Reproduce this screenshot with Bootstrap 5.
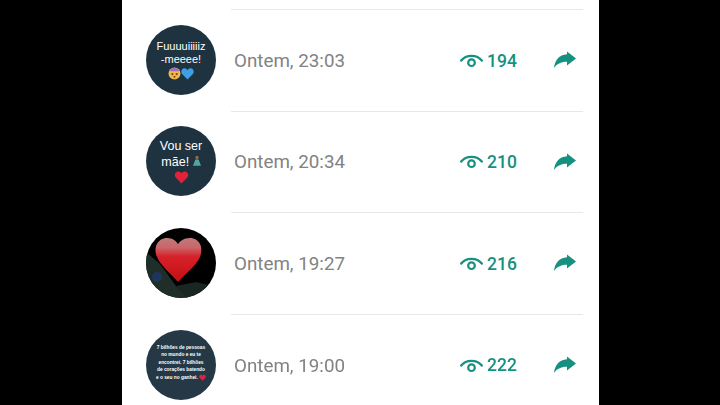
<!DOCTYPE html>
<html lang="pt">
<head>
<meta charset="utf-8">
<title>Status</title>
<link href="https://cdn.jsdelivr.net/npm/bootstrap@5.3.0/dist/css/bootstrap.min.css" rel="stylesheet">
<style>
html,body{height:405px;overflow:hidden;background:#000}
.sheet{width:477px;height:405px;margin-left:122px;background:#fff;padding-top:9px;font-family:Roboto,"Liberation Sans",sans-serif;filter:blur(.45px)}
.entry{height:101.6px}
.avatar-cell{width:109px;padding-left:24px;flex:none}
.avatar-disc{width:70px;height:70px;border-radius:50%;background:#1f3240;color:#fff;text-align:center;overflow:hidden;font-family:"Liberation Sans",sans-serif}
.entry-body{border-top:1px solid #e8e8e8;margin-right:16px;padding-left:3px;padding-right:7px}
.stamp{font-size:18.8px;color:#828282;line-height:1;margin-top:2px}
.views{color:#16917f;font-size:17.5px;font-weight:500;line-height:1;width:58px;margin-right:36px;gap:4px;margin-top:2px}
.av-a{font-size:11px;line-height:13.500px;padding-top:15px}
.av-b{font-size:12.500px;line-height:15px;padding-top:13px}
.av-d{font-size:4.800px;line-height:7.600px;font-weight:700;padding-top:14px;background:#243846}
.emoji{display:inline-block;vertical-align:-2px}
.disc-black{background:#000}
</style>
</head>
<body>
<div class="sheet">

<div class="entry d-flex">
  <div class="avatar-cell d-flex align-items-center">
    <div class="avatar-disc av-a">Fuuuuiiiiiz<br>-meeee!<br>
      <svg class="emoji" width="13" height="13" viewBox="0 0 12 12"><circle cx="6" cy="6" r="5.500" fill="#f2b94a"/><path d="M2 4a4 3 0 0 1 8 0z" fill="#9a6fc0"/><circle cx="4" cy="6.500" r="1" fill="#6b4a20"/><circle cx="8" cy="6.500" r="1" fill="#6b4a20"/><circle cx="6" cy="9" r="1" fill="#6b4a20"/></svg><svg class="emoji" width="13" height="13" viewBox="0 0 12 12"><path d="M6 11.500 1 6.500C-.6 4.400.6 1.200 3.200 1.200 4.500 1.200 5.500 2 6 3c.5-1 1.500-1.800 2.800-1.800 2.600 0 3.800 3.200 2.200 5.300z" fill="#3d9fe6"/></svg>
    </div>
  </div>
  <div class="entry-body flex-grow-1 d-flex align-items-center">
    <div class="stamp flex-grow-1">Ontem, 23:03</div>
    <div class="views d-flex align-items-center">
      <svg width="23" height="15" viewBox="0 0 23 15" class="flex-shrink-0"><path d="M1.200 6.500C6 .2 17 .2 21.800 6.500" fill="none" stroke="#16917f" stroke-width="2.300" stroke-linecap="round"/><circle cx="11.500" cy="8.700" r="3.300" fill="none" stroke="#16917f" stroke-width="2.200"/></svg>
      <span>194</span>
    </div>
    <svg width="22" height="18" viewBox="0 0 22 18" class="flex-shrink-0"><path d="M13 .5 22 7.500 13 14.500V10.800C8 10.800 3 12.500 0 17 .8 9.500 5 3.800 13 3.300z" fill="#16917f"/></svg>
  </div>
</div>

<div class="entry d-flex">
  <div class="avatar-cell d-flex align-items-center">
    <div class="avatar-disc av-b">Vou ser<br>mãe!
      <svg class="emoji" width="8" height="14" viewBox="0 0 10 14"><circle cx="5" cy="2.500" r="2" fill="#9c6b4a"/><path d="M3 5h4l3 8H0z" fill="#4fa89a"/></svg><br>
      <svg class="emoji" width="15" height="14" viewBox="0 0 12 12"><path d="M6 11.500 1 6.500C-.6 4.400.6 1.200 3.200 1.200 4.500 1.200 5.500 2 6 3c.5-1 1.500-1.800 2.800-1.800 2.600 0 3.800 3.200 2.200 5.300z" fill="#e0233a"/></svg>
    </div>
  </div>
  <div class="entry-body flex-grow-1 d-flex align-items-center">
    <div class="stamp flex-grow-1">Ontem, 20:34</div>
    <div class="views d-flex align-items-center">
      <svg width="23" height="15" viewBox="0 0 23 15" class="flex-shrink-0"><path d="M1.200 6.500C6 .2 17 .2 21.800 6.500" fill="none" stroke="#16917f" stroke-width="2.300" stroke-linecap="round"/><circle cx="11.500" cy="8.700" r="3.300" fill="none" stroke="#16917f" stroke-width="2.200"/></svg>
      <span>210</span>
    </div>
    <svg width="22" height="18" viewBox="0 0 22 18" class="flex-shrink-0"><path d="M13 .5 22 7.500 13 14.500V10.800C8 10.800 3 12.500 0 17 .8 9.500 5 3.800 13 3.300z" fill="#16917f"/></svg>
  </div>
</div>

<div class="entry d-flex">
  <div class="avatar-cell d-flex align-items-center">
    <div class="avatar-disc disc-black">
      <svg width="70" height="70" viewBox="0 0 70 70">
        <defs><linearGradient id="hg" x1="0" y1="0" x2="0" y2="1"><stop offset="0" stop-color="#c07a7c"/><stop offset=".22" stop-color="#c9666a"/><stop offset=".42" stop-color="#d6222a"/><stop offset="1" stop-color="#c40d14"/></linearGradient></defs>
        <path d="M0 24 14 36 30 58 42 70H0z" fill="#1f2e29"/>
        <path d="M30 58 50 54 66 58 60 70H40z" fill="#1a2622"/>
        <circle cx="11" cy="49" r="5" fill="#1e3560"/>
        <path d="M32 54C26 47 14 37 11 29 7 19 12 10 21 10 27 10 30 13 32 16 34 13 38 10 44 10 53 10 58 19 54 29 51 37 38 47 32 54z" fill="url(#hg)"/>
      </svg>
    </div>
  </div>
  <div class="entry-body flex-grow-1 d-flex align-items-center">
    <div class="stamp flex-grow-1">Ontem, 19:27</div>
    <div class="views d-flex align-items-center">
      <svg width="23" height="15" viewBox="0 0 23 15" class="flex-shrink-0"><path d="M1.200 6.500C6 .2 17 .2 21.800 6.500" fill="none" stroke="#16917f" stroke-width="2.300" stroke-linecap="round"/><circle cx="11.500" cy="8.700" r="3.300" fill="none" stroke="#16917f" stroke-width="2.200"/></svg>
      <span>216</span>
    </div>
    <svg width="22" height="18" viewBox="0 0 22 18" class="flex-shrink-0"><path d="M13 .5 22 7.500 13 14.500V10.800C8 10.800 3 12.500 0 17 .8 9.500 5 3.800 13 3.300z" fill="#16917f"/></svg>
  </div>
</div>

<div class="entry d-flex">
  <div class="avatar-cell d-flex align-items-center">
    <div class="avatar-disc av-d">7 bilhões de pessoas<br>no mundo e eu te<br>encontrei. 7 bilhões<br>de corações batendo<br>e o seu no ganhei.
      <svg class="emoji" width="7" height="7" viewBox="0 0 12 12"><path d="M6 11.500 1 6.500C-.6 4.400.6 1.200 3.200 1.200 4.500 1.200 5.500 2 6 3c.5-1 1.500-1.800 2.800-1.800 2.600 0 3.800 3.200 2.200 5.300z" fill="#e0233a"/></svg>
    </div>
  </div>
  <div class="entry-body flex-grow-1 d-flex align-items-center">
    <div class="stamp flex-grow-1">Ontem, 19:00</div>
    <div class="views d-flex align-items-center">
      <svg width="23" height="15" viewBox="0 0 23 15" class="flex-shrink-0"><path d="M1.200 6.500C6 .2 17 .2 21.800 6.500" fill="none" stroke="#16917f" stroke-width="2.300" stroke-linecap="round"/><circle cx="11.500" cy="8.700" r="3.300" fill="none" stroke="#16917f" stroke-width="2.200"/></svg>
      <span>222</span>
    </div>
    <svg width="22" height="18" viewBox="0 0 22 18" class="flex-shrink-0"><path d="M13 .5 22 7.500 13 14.500V10.800C8 10.800 3 12.500 0 17 .8 9.500 5 3.800 13 3.300z" fill="#16917f"/></svg>
  </div>
</div>

</div>
<script src="https://cdn.jsdelivr.net/npm/bootstrap@5.3.0/dist/js/bootstrap.bundle.min.js"></script>
</body>
</html>
